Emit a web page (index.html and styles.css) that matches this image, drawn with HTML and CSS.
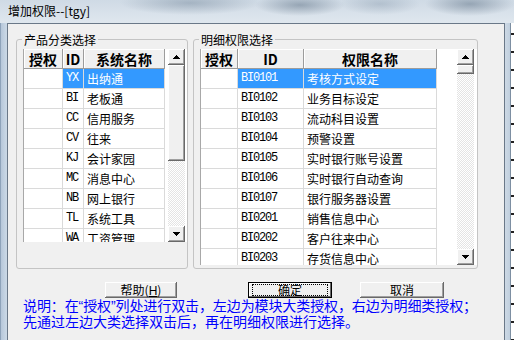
FILE: index.html
```html
<!DOCTYPE html>
<html lang="zh-CN">
<head>
  <meta charset="UTF-8">
  <title>增加权限--[tgy]</title>
  <link rel="stylesheet" href="styles.css">
</head>
<body>

<div class="window">
  <div class="titlebar">增加权限--[tgy]</div>
  <div class="frame">
    <div class="frame-left"></div>
    <div class="client">

      <div class="groups">
        <fieldset class="group group-product">
          <legend>产品分类选择</legend>
          <div class="grid grid-product">
            <table class="grid-table table-product">
              <thead>
                <tr><th class="c-auth">授权</th><th class="c-code">ID</th><th class="c-name">系统名称</th></tr>
              </thead>
              <tbody>
                <tr class="selected"><td></td><td class="code">YX</td><td>出纳通</td></tr>
                <tr><td></td><td class="code">BI</td><td>老板通</td></tr>
                <tr><td></td><td class="code">CC</td><td>信用服务</td></tr>
                <tr><td></td><td class="code">CV</td><td>往来</td></tr>
                <tr><td></td><td class="code">KJ</td><td>会计家园</td></tr>
                <tr><td></td><td class="code">MC</td><td>消息中心</td></tr>
                <tr><td></td><td class="code">NB</td><td>网上银行</td></tr>
                <tr><td></td><td class="code">TL</td><td>系统工具</td></tr>
                <tr><td></td><td class="code">WA</td><td>工资管理</td></tr>
              </tbody>
            </table>
            <div class="vscroll">
              <div class="sb-btn"><svg width="7" height="4" viewBox="0 0 7 4"><path d="M3 0h1v1h1v1h1v1h1v1H0V3h1V2h1V1h1z"/></svg></div>
              <div class="sb-thumb thumb-product"></div>
              <div class="sb-track"></div>
              <div class="sb-btn"><svg width="7" height="4" viewBox="0 0 7 4"><path d="M0 0h7v1H6v1H5v1H4v1H3V3H2V2H1V1H0z"/></svg></div>
            </div>
          </div>
        </fieldset>

        <fieldset class="group group-detail">
          <legend>明细权限选择</legend>
          <div class="grid grid-detail">
            <table class="grid-table table-detail">
              <thead>
                <tr><th class="c-auth">授权</th><th class="c-code">ID</th><th class="c-name">权限名称</th></tr>
              </thead>
              <tbody>
                <tr class="selected"><td></td><td class="code">BI0101</td><td>考核方式设定</td></tr>
                <tr><td></td><td class="code">BI0102</td><td>业务目标设定</td></tr>
                <tr><td></td><td class="code">BI0103</td><td>流动科目设置</td></tr>
                <tr><td></td><td class="code">BI0104</td><td>预警设置</td></tr>
                <tr><td></td><td class="code">BI0105</td><td>实时银行账号设置</td></tr>
                <tr><td></td><td class="code">BI0106</td><td>实时银行自动查询</td></tr>
                <tr><td></td><td class="code">BI0107</td><td>银行服务器设置</td></tr>
                <tr><td></td><td class="code">BI0201</td><td>销售信息中心</td></tr>
                <tr><td></td><td class="code">BI0202</td><td>客户往来中心</td></tr>
                <tr><td></td><td class="code">BI0203</td><td>存货信息中心</td></tr>
              </tbody>
            </table>
            <div class="vscroll">
              <div class="sb-btn"><svg width="7" height="4" viewBox="0 0 7 4"><path d="M3 0h1v1h1v1h1v1h1v1H0V3h1V2h1V1h1z"/></svg></div>
              <div class="sb-thumb thumb-detail"></div>
              <div class="sb-track"></div>
              <div class="sb-btn"><svg width="7" height="4" viewBox="0 0 7 4"><path d="M0 0h7v1H6v1H5v1H4v1H3V3H2V2H1V1H0z"/></svg></div>
            </div>
          </div>
        </fieldset>
      </div>

      <div class="actions">
        <button class="btn btn-help">帮助(<u>H</u>)</button>
        <button class="btn btn-ok"><span class="focus">确定</span></button>
        <button class="btn btn-cancel">取消</button>
      </div>

      <p class="note"><span class="note-first">说明：在<span class="q">“</span>授权<span class="q">”</span>列处进行双击，左边为模块大类授权，右边为明细类授权；</span><br>先通过左边大类选择双击后，再在明细权限进行选择。</p>

    </div>
    <div class="frame-right"></div>
    <div class="behind"></div>
  </div>
</div>

</body>
</html>
```

FILE: styles.css
```css
* {
  box-sizing: border-box;
}

body {
  margin: 0;
  width: 514px;
  height: 340px;
  overflow: hidden;
  font-family: "Noto Sans CJK SC", "DejaVu Sans", sans-serif;
  font-size: 12px;
  color: #000;
}

.window {
  display: flex;
  flex-direction: column;
  height: 340px;
}

.titlebar {
  height: 23px;
  padding-left: 8px;
  line-height: 22px;
  font-size: 12px;
  background:
    radial-gradient(ellipse 70px 12px at 190px 3px, rgba(110, 130, 150, 0.45), transparent),
    radial-gradient(ellipse 45px 11px at 300px 5px, rgba(90, 110, 130, 0.5), transparent),
    radial-gradient(ellipse 40px 11px at 380px 4px, rgba(120, 140, 160, 0.35), transparent),
    radial-gradient(ellipse 45px 12px at 470px 4px, rgba(90, 110, 130, 0.5), transparent),
    linear-gradient(#cfdae5, #d9e2eb 60%, #dfe7ee);
}

.frame {
  flex: 1;
  display: flex;
}

.frame-left {
  width: 7px;
  background: linear-gradient(90deg, #8ea3ba 0 1px, #b6c7da 1px, #c9d7e5 6px);
}

.frame-right {
  width: 6px;
  background: linear-gradient(90deg, #cdd9e5, #c0cfde 5px, #7d8fa2 5px);
}

.behind {
  width: 3px;
  background: repeating-linear-gradient(#fff 0 10px, #222 10px 12px, #fff 12px 18px);
}

.client {
  width: 498px;
  background: #f0f0f0;
  border-top: 1px solid #6a7888;
  border-left: 1px solid #6a7888;
  border-right: 1px solid #6a7888;
}

/* group boxes */

.groups {
  display: flex;
  gap: 5px;
  margin-top: 9px;
  padding-left: 8px;
}

.group {
  margin: 0;
  min-width: 0;
  border: 1px solid #c4c4c4;
  border-radius: 3px;
  padding: 3px 0 3px 6px;
}

.group legend {
  margin-left: -1px;
  padding: 0 2px;
  font-size: 12px;
  line-height: 13px;
}

.group-product { width: 172px; }
.group-detail { width: 285px; }

/* grids */

.grid {
  display: flex;
  background: #fff;
  border-left: 1px solid #a8a8a8;
  overflow: hidden;
}

.grid-product {
  height: 193px;
  padding-right: 2px;
}

.grid-detail {
  height: 216px;
  padding-right: 3px;
}

.grid-table {
  border-collapse: separate;
  border-spacing: 0;
  table-layout: fixed;
  align-self: flex-start;
}

.table-product { width: 141px; }
.table-detail { width: 236px; }

.table-product .c-auth { width: 39px; }
.table-product .c-code { width: 21px; }
.table-product .c-name { width: 81px; }

.table-detail .c-auth { width: 37px; }
.table-detail .c-code { width: 66px; }
.table-detail .c-name { width: 133px; }

.grid-table tr {
  height: 20px;
}

.grid-table th {
  padding: 0;
  background: #f0f0f0;
  border-right: 1px solid #9c9c9c;
  border-bottom: 1px solid #9c9c9c;
  box-shadow: inset 1px 1px #fff;
  font-size: 14px;
  font-weight: bold;
  line-height: 18px;
  text-align: center;
  white-space: nowrap;
  overflow: hidden;
}

.grid-table td {
  padding: 0 0 0 3px;
  border-right: 1px solid #dadada;
  border-bottom: 1px solid #dadada;
  font-size: 12px;
  line-height: 19px;
  white-space: nowrap;
  overflow: hidden;
}

.grid-table td.code {
  font-family: "Liberation Mono", monospace;
  letter-spacing: -1.2px;
}

.grid-table tr.selected td + td {
  background: #3399ff;
  color: #fff;
}

/* vertical scroll bars */

.vscroll {
  width: 17px;
  margin-left: auto;
  display: flex;
  flex-direction: column;
}

.sb-btn,
.sb-thumb {
  background: #f0f0f0;
  box-shadow: inset -1px -1px #696969, inset 1px 1px #fff, inset -2px -2px #a0a0a0;
}

.sb-btn {
  height: 16px;
  display: flex;
  align-items: center;
  justify-content: center;
}

.sb-btn svg {
  display: block;
  fill: #000;
}

.thumb-product { height: 96px; }
.thumb-detail { height: 9px; }

.sb-track {
  flex: 1;
  background: repeating-conic-gradient(#fff 0 25%, #e4e4e4 0 50%) 0 0 / 2px 2px;
}

/* buttons */

.actions {
  display: flex;
  margin-top: 13px;
}

.btn {
  height: 16px;
  padding: 0;
  border: none;
  background: #f0f0f0;
  box-shadow: inset -1px -1px #696969, inset 1px 1px #fff, inset -2px -2px #a0a0a0;
  font-family: "Noto Sans CJK SC", "DejaVu Sans", sans-serif;
  font-size: 12px;
  line-height: 14px;
  color: #000;
}

.btn u {
  font-family: "Liberation Sans", sans-serif;
}

.btn-help {
  width: 72px;
  margin-left: 97px;
}

.btn-ok {
  width: 84px;
  margin-left: 71px;
  border: 1px solid #000;
  box-shadow: inset -1px -1px #696969, inset 1px 1px #fff;
}

.btn-ok .focus {
  display: block;
  height: 12px;
  margin: 1px 3px;
  border: 1px dotted #000;
  line-height: 10px;
}

.btn-cancel {
  width: 84px;
  margin-left: 28px;
}

/* help text */

.note {
  margin: 0;
  padding-left: 15px;
  font-size: 14px;
  line-height: 15px;
  color: #0000ff;
  white-space: nowrap;
}

.note-first {
  letter-spacing: -0.1px;
}

.note .q {
  font-family: "Liberation Sans", sans-serif;
}
```
